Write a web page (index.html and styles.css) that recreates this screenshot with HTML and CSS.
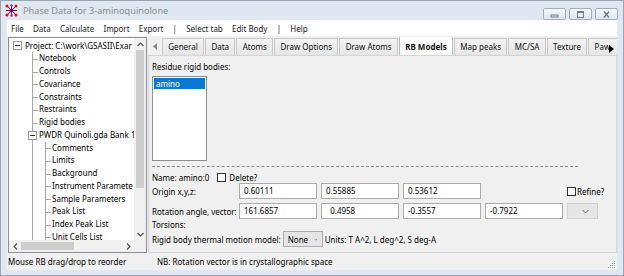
FILE: index.html
```html
<!DOCTYPE html>
<html>
<head>
<meta charset="utf-8">
<link rel="stylesheet" href="styles.css">
</head>
<body>
<div class="window">
  <div class="titlebar">
    <svg class="appicon" viewBox="0 0 13 13">
      <rect x="0" y="0" width="13" height="13" fill="#f4e8ee"/>
      <path d="M2 2 L11 11 M11 2 L2 11 M6.5 1 V12 M1 6.5 H12" stroke="#7a1040" stroke-width="1"/>
      <circle cx="2" cy="2" r="1.6" fill="#d01818"/>
      <circle cx="11" cy="2" r="1.6" fill="#d01818"/>
      <circle cx="2" cy="11" r="1.6" fill="#d01818"/>
      <circle cx="11" cy="11" r="1.6" fill="#d01818"/>
      <circle cx="6.5" cy="6.5" r="2" fill="#5a0a8a"/>
      <circle cx="6.5" cy="1.5" r="1.2" fill="#2050c0"/>
      <circle cx="6.5" cy="11.5" r="1.2" fill="#2050c0"/>
    </svg>
    <span class="title">Phase Data for 3-aminoquinolone</span>
    <div class="winbtns">
      <span class="wb"><svg width="9" height="7" viewBox="0 0 9 7"><rect x="1" y="4" width="7" height="2" fill="none" stroke="#6f7d92" stroke-width="1"/></svg></span>
      <span class="wb"><svg width="9" height="7" viewBox="0 0 9 7"><rect x="1.5" y="0.5" width="6" height="6" fill="none" stroke="#6f7d92" stroke-width="1"/><line x1="1.5" y1="1.5" x2="7.5" y2="1.5" stroke="#6f7d92"/></svg></span>
      <span class="wb"><svg width="9" height="7" viewBox="0 0 9 7"><path d="M2 0.5 L7 6.5 M7 0.5 L2 6.5" stroke="#6f7d92" stroke-width="1.4"/></svg></span>
    </div>
  </div>
  <div class="client">
    <div class="menubar">
      <span class="mi">File</span>
      <span class="mi">Data</span>
      <span class="mi">Calculate</span>
      <span class="mi">Import</span>
      <span class="mi">Export</span>
      <span class="mi">|</span>
      <span class="mi">Select tab</span>
      <span class="mi">Edit Body</span>
      <span class="mi">|</span>
      <span class="mi">Help</span>
    </div>
    <div class="main">
      <div class="tree">
        <div class="tree-items">
          <div class="row root"><span class="exp"></span><span class="lbl">Project: C:\work\GSASII\Exar</span></div>
          <div class="kids l1">
            <div class="row leaf">Notebook</div>
            <div class="row leaf">Controls</div>
            <div class="row leaf">Covariance</div>
            <div class="row leaf">Constraints</div>
            <div class="row leaf">Restraints</div>
            <div class="row leaf">Rigid bodies</div>
            <div class="row branch"><span class="exp"></span>PWDR Quinoli.gda Bank 1</div>
            <div class="kids l2">
              <div class="row leaf">Comments</div>
              <div class="row leaf">Limits</div>
              <div class="row leaf">Background</div>
              <div class="row leaf">Instrument Paramete</div>
              <div class="row leaf">Sample Parameters</div>
              <div class="row leaf">Peak List</div>
              <div class="row leaf">Index Peak List</div>
              <div class="row leaf">Unit Cells List</div>
            </div>
          </div>
        </div>
        <div class="vscroll">
          <span class="sarrow"><svg width="7" height="5" viewBox="0 0 7 5"><path d="M0.5 4 L3.5 1 L6.5 4" fill="none" stroke="#505050" stroke-width="1.1"/></svg></span>
          <span class="vthumb"></span>
          <span class="vtrack"></span>
          <span class="sarrow"><svg width="7" height="5" viewBox="0 0 7 5"><path d="M0.5 1 L3.5 4 L6.5 1" fill="none" stroke="#505050" stroke-width="1.1"/></svg></span>
        </div>
        <div class="hscroll">
          <span class="harrow"><svg width="5" height="7" viewBox="0 0 5 7"><path d="M4 0.5 L1 3.5 L4 6.5" fill="none" stroke="#505050" stroke-width="1.1"/></svg></span>
          <span class="hthumb"></span>
          <span class="htrack"></span>
          <span class="harrow"><svg width="5" height="7" viewBox="0 0 5 7"><path d="M1 0.5 L4 3.5 L1 6.5" fill="none" stroke="#505050" stroke-width="1.1"/></svg></span>
        </div>
        <div class="corner"></div>
      </div>
      <div class="notebook">
        <div class="tabs">
          <span class="tabscroll"><svg width="4" height="7" viewBox="0 0 4 7"><path d="M4 0 L0 3.5 L4 7Z" fill="#8a8a8a"/></svg></span>
          <span class="tab">General</span>
          <span class="tab">Data</span>
          <span class="tab">Atoms</span>
          <span class="tab">Draw Options</span>
          <span class="tab">Draw Atoms</span>
          <span class="tab sel">RB Models</span>
          <span class="tab">Map peaks</span>
          <span class="tab">MC/SA</span>
          <span class="tab">Texture</span>
          <span class="tab last">Paw</span>
          <span class="tabmore"><svg width="5" height="8" viewBox="0 0 5 8"><path d="M0 0 L5 4 L0 8Z" fill="#000"/></svg></span>
        </div>
        <div class="page">
          <div class="lbl-row first">Residue rigid bodies:</div>
          <div class="listbox"><div class="li sel">amino</div></div>
          <div class="dashed"></div>
          <div class="name-row">
            <span>Name: amino:0</span>
            <span class="cb"></span>
            <span>Delete?</span>
          </div>
          <div class="vals">
            <span class="vlabel">Origin x,y,z:</span>
            <span class="tb">0.60111</span>
            <span class="tb">0.55885</span>
            <span class="tb">0.53612</span>
            <span></span>
            <span class="refine"><span class="cb"></span>Refine?</span>
            <span class="vlabel">Rotation angle, vector:</span>
            <span class="tb">161.6857</span>
            <span class="tb">&nbsp;&nbsp;0.4958</span>
            <span class="tb">-0.3557</span>
            <span class="tb">-0.7922</span>
            <span class="combo dis"><svg width="7" height="5" viewBox="0 0 7 5"><path d="M0.5 1 L3.5 4 L6.5 1" fill="none" stroke="#707070" stroke-width="1"/></svg></span>
          </div>
          <div class="lbl-row tors">Torsions:</div>
          <div class="thermal-row">
            <span>Rigid body thermal motion model:</span>
            <span class="combo">None<svg width="7" height="5" viewBox="0 0 7 5"><path d="M0.5 1 L3.5 4 L6.5 1" fill="none" stroke="#505050" stroke-width="1"/></svg></span>
            <span>Units: T A^2, L deg^2, S deg-A</span>
          </div>
        </div>
      </div>
    </div>
    <div class="statusbar">
      <div class="sf1">Mouse RB drag/drop to reorder</div>
      <div class="sf2">NB: Rotation vector is in crystallographic space</div>
      <svg class="grip" width="8" height="8" viewBox="0 0 8 8">
        <rect x="6" y="0" width="1" height="1" fill="#a0a0a0"/>
        <rect x="4" y="2" width="1" height="1" fill="#a0a0a0"/><rect x="6" y="2" width="1" height="1" fill="#a0a0a0"/>
        <rect x="2" y="4" width="1" height="1" fill="#a0a0a0"/><rect x="4" y="4" width="1" height="1" fill="#a0a0a0"/><rect x="6" y="4" width="1" height="1" fill="#a0a0a0"/>
        <rect x="0" y="6" width="1" height="1" fill="#a0a0a0"/><rect x="2" y="6" width="1" height="1" fill="#a0a0a0"/><rect x="4" y="6" width="1" height="1" fill="#a0a0a0"/><rect x="6" y="6" width="1" height="1" fill="#a0a0a0"/>
      </svg>
    </div>
  </div>
</div>
</body>
</html>
```
FILE: styles.css
```css
* { box-sizing: border-box; }
html, body { margin: 0; padding: 0; }
body {
  font-family: "Noto Sans", "DejaVu Sans", sans-serif;
  font-size: 8px;
  color: #000;
  background: #dde6f0;
}
.window {
  width: 624px;
  height: 276px;
  background: #dfe7f1;
  border: 1px solid #9ba6b4;
  display: flex;
  flex-direction: column;
  overflow: hidden;
}
.titlebar {
  height: 19px;
  flex: none;
  display: flex;
  align-items: center;
  padding-left: 4px;
}
.appicon { width: 13px; height: 13px; display: block; }
.title {
  margin-left: 5px;
  color: #8a8f96;
  font-size: 9.2px;
}
.winbtns {
  margin-left: auto;
  margin-right: 5px;
  display: flex;
  gap: 3px;
  align-self: flex-start;
  margin-top: 7px;
}
.wb {
  width: 23px;
  height: 12px;
  border: 1px solid #a2aebf;
  border-radius: 2px;
  background: linear-gradient(#f5f8fb, #dfe6ef);
  display: flex;
  align-items: center;
  justify-content: center;
}
.wb svg { display: block; }
.client {
  flex: 1;
  min-height: 0;
  margin: 0 6px 5px 6px;
  display: flex;
  flex-direction: column;
  background: #f0f0f0;
}
.menubar {
  height: 16px;
  flex: none;
  background: #fff;
  display: flex;
  align-items: center;
  padding-left: 4px;
  gap: 9.2px;
  color: #222;
}
.main {
  flex: 1;
  display: flex;
  padding-top: 1px;
  min-height: 0;
}
.tree {
  width: 139px;
  flex: none;
  margin-left: 1px;
  border: 1px solid #8a8e96;
  background: #fff;
  display: grid;
  grid-template-columns: minmax(0, 1fr) 12px;
  grid-template-rows: minmax(0, 1fr) 12px;
  overflow: hidden;
}
.tree-items {
  padding-top: 1.5px;
  overflow: hidden;
  white-space: nowrap;
  min-width: 0;
  min-height: 0;
}
.row {
  height: 12.75px;
  line-height: 12.75px;
  position: relative;
  white-space: nowrap;
}
.root { padding-left: 4px; display: flex; align-items: center; }
.exp {
  display: inline-block;
  width: 9px;
  height: 9px;
  border: 1px solid #9a9a9a;
  background: #fff;
  position: relative;
  flex: none;
}
.exp::after {
  content: "";
  position: absolute;
  left: 1px;
  right: 1px;
  top: 3px;
  height: 1px;
  background: #333;
}
.root .exp { margin-right: 3px; }
.kids { border-left: 1px solid #a8a8a8; }
.l1 { margin-left: 23px; }
.l2 { margin-left: 12px; }
.leaf { padding-left: 6px; }
.leaf::before {
  content: "";
  position: absolute;
  left: 0;
  top: 6.5px;
  width: 5px;
  border-top: 1px solid #a8a8a8;
}
.branch { padding-left: 6px; }
.branch .exp {
  position: absolute;
  left: -5px;
  top: 2px;
}
.vscroll {
  grid-column: 2;
  grid-row: 1;
  background: #f0f0f0;
  display: flex;
  flex-direction: column;
  min-height: 0;
}
.sarrow {
  height: 12px;
  display: flex;
  align-items: center;
  justify-content: center;
  flex: none;
}
.vthumb {
  height: 138px;
  margin: 0 2px;
  background: #cdcdcd;
  flex: none;
}
.vtrack { flex: 1; }
.hscroll {
  grid-column: 1;
  grid-row: 2;
  background: #f0f0f0;
  display: flex;
}
.harrow {
  width: 12px;
  display: flex;
  align-items: center;
  justify-content: center;
  flex: none;
}
.hthumb {
  width: 53px;
  margin: 2px 0;
  background: #cdcdcd;
  flex: none;
}
.htrack { flex: 1; }
.corner { grid-column: 2; grid-row: 2; background: #f0f0f0; }

.notebook {
  flex: 1;
  margin-left: 1px;
  display: flex;
  flex-direction: column;
  min-width: 0;
}
.tabs {
  height: 18px;
  flex: none;
  display: flex;
  align-items: flex-end;
  position: relative;
  overflow: hidden;
  white-space: nowrap;
}
.tabscroll {
  width: 14px;
  height: 17px;
  display: flex;
  align-items: center;
  justify-content: center;
  flex: none;
}
.tab {
  height: 17px;
  line-height: 16px;
  padding: 0 5.3px;
  background: linear-gradient(#f2f2f2, #e6e6e6);
  border: 1px solid #c9c9c9;
  border-bottom: none;
  margin-right: 1px;
  flex: none;
  color: #111;
}
.tab.last { padding-right: 14px; }
.tab.sel {
  height: 19px;
  line-height: 19px;
  background: #fff;
  font-weight: bold;
  border-color: #bdbdbd;
}
.tabmore {
  position: absolute;
  right: 2px;
  top: 7px;
  width: 8px;
  height: 10px;
  display: flex;
  align-items: center;
  justify-content: center;
}
.page {
  flex: 1;
  min-height: 0;
  border: 1px solid #d4d4d4;
  background: #f0f0f0;
  padding: 5px 3px 0 3px;
  display: flex;
  flex-direction: column;
  align-items: flex-start;
}
.lbl-row { height: 12px; line-height: 12px; }
.listbox {
  margin-top: 3px;
  width: 55px;
  height: 85px;
  border: 1px solid #8f8f8f;
  background: #fff;
  padding: 1px;
}
.li { height: 11px; line-height: 11px; padding-left: 2px; }
.li.sel { background: #0a78d7; color: #fff; }
.dashed {
  margin-top: 5px;
  width: 426px;
  border-top: 1px dashed #8a8a8a;
}
.name-row {
  margin-top: 4px;
  height: 12px;
  display: flex;
  align-items: center;
  gap: 3px;
}
.cb {
  display: inline-block;
  width: 9px;
  height: 9px;
  border: 1px solid #333;
  background: #fff;
  flex: none;
}
.name-row .cb { margin-left: 5px; }
.vals {
  display: grid;
  grid-template-columns: 83px 78px 78px 78px 78px auto;
  column-gap: 4px;
  row-gap: 4px;
  align-items: center;
}
.vlabel { white-space: nowrap; }
.tb {
  height: 16px;
  line-height: 14px;
  border: 1px solid #acacac;
  background: #fff;
  padding-left: 4px;
  white-space: pre;
}
.refine { display: flex; align-items: center; gap: 1px; }
.combo {
  height: 16px;
  border: 1px solid #acacac;
  background: #e5e5e5;
  display: flex;
  align-items: center;
  justify-content: space-between;
  padding: 0 4px 0 4px;
}
.combo.dis {
  width: 31px;
  background: #e6e6e6;
  border-color: #d0d0d0;
  justify-content: flex-end;
  padding-right: 8px;
}
.thermal-row {
  height: 16px;
  display: flex;
  align-items: center;
  gap: 2px;
}
.thermal-row .combo { width: 40px; gap: 6px; }
.statusbar {
  height: 17px;
  flex: none;
  display: flex;
  align-items: center;
  position: relative;
}
.sf1 { width: 141px; padding-left: 1px; }
.sf2 { flex: 1; padding-left: 9px; }
.grip { position: absolute; right: 1px; bottom: 1px; }
```
